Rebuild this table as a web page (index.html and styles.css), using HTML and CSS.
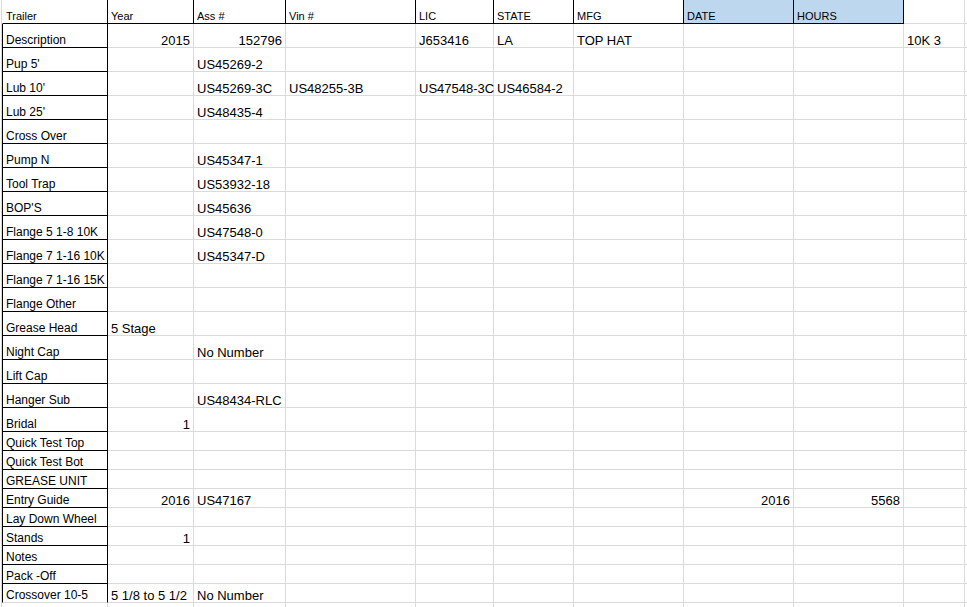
FILE: index.html
```html
<!DOCTYPE html>
<html lang="en">
<head>
    <meta charset="UTF-8">
    <meta name="viewport" content="width=device-width, initial-scale=1.0">
    <title>Trailer Equipment</title>
    <link rel="stylesheet" href="styles.css">
</head>
<body>
    <div class="sheet">
        <!-- header row -->
        <div class="c h first">Trailer</div><div class="c h">Year</div><div class="c h">Ass #</div><div class="c h">Vin #</div><div class="c h">LIC</div><div class="c h">STATE</div><div class="c h">MFG</div><div class="c h blue">DATE</div><div class="c h blue">HOURS</div><div class="c"></div><div class="c"></div>

        <!-- tall rows -->
        <div class="c lbl">Description</div><div class="c n">2015</div><div class="c n">152796</div><div class="c"></div><div class="c">J653416</div><div class="c">LA</div><div class="c">TOP HAT</div><div class="c"></div><div class="c"></div><div class="c">10K 3</div><div class="c"></div>
        <div class="c lbl">Pup 5'</div><div class="c"></div><div class="c">US45269-2</div><div class="c"></div><div class="c"></div><div class="c"></div><div class="c"></div><div class="c"></div><div class="c"></div><div class="c"></div><div class="c"></div>
        <div class="c lbl">Lub 10'</div><div class="c"></div><div class="c">US45269-3C</div><div class="c">US48255-3B</div><div class="c">US47548-3C</div><div class="c">US46584-2</div><div class="c"></div><div class="c"></div><div class="c"></div><div class="c"></div><div class="c"></div>
        <div class="c lbl">Lub 25'</div><div class="c"></div><div class="c">US48435-4</div><div class="c"></div><div class="c"></div><div class="c"></div><div class="c"></div><div class="c"></div><div class="c"></div><div class="c"></div><div class="c"></div>
        <div class="c lbl">Cross Over</div><div class="c"></div><div class="c"></div><div class="c"></div><div class="c"></div><div class="c"></div><div class="c"></div><div class="c"></div><div class="c"></div><div class="c"></div><div class="c"></div>
        <div class="c lbl">Pump N</div><div class="c"></div><div class="c">US45347-1</div><div class="c"></div><div class="c"></div><div class="c"></div><div class="c"></div><div class="c"></div><div class="c"></div><div class="c"></div><div class="c"></div>
        <div class="c lbl">Tool Trap</div><div class="c"></div><div class="c">US53932-18</div><div class="c"></div><div class="c"></div><div class="c"></div><div class="c"></div><div class="c"></div><div class="c"></div><div class="c"></div><div class="c"></div>
        <div class="c lbl">BOP'S</div><div class="c"></div><div class="c">US45636</div><div class="c"></div><div class="c"></div><div class="c"></div><div class="c"></div><div class="c"></div><div class="c"></div><div class="c"></div><div class="c"></div>
        <div class="c lbl">Flange 5 1-8 10K</div><div class="c"></div><div class="c">US47548-0</div><div class="c"></div><div class="c"></div><div class="c"></div><div class="c"></div><div class="c"></div><div class="c"></div><div class="c"></div><div class="c"></div>
        <div class="c lbl">Flange 7 1-16 10K</div><div class="c"></div><div class="c">US45347-D</div><div class="c"></div><div class="c"></div><div class="c"></div><div class="c"></div><div class="c"></div><div class="c"></div><div class="c"></div><div class="c"></div>
        <div class="c lbl">Flange 7 1-16 15K</div><div class="c"></div><div class="c"></div><div class="c"></div><div class="c"></div><div class="c"></div><div class="c"></div><div class="c"></div><div class="c"></div><div class="c"></div><div class="c"></div>
        <div class="c lbl">Flange Other</div><div class="c"></div><div class="c"></div><div class="c"></div><div class="c"></div><div class="c"></div><div class="c"></div><div class="c"></div><div class="c"></div><div class="c"></div><div class="c"></div>
        <div class="c lbl">Grease Head</div><div class="c">5 Stage</div><div class="c"></div><div class="c"></div><div class="c"></div><div class="c"></div><div class="c"></div><div class="c"></div><div class="c"></div><div class="c"></div><div class="c"></div>
        <div class="c lbl">Night Cap</div><div class="c"></div><div class="c">No Number</div><div class="c"></div><div class="c"></div><div class="c"></div><div class="c"></div><div class="c"></div><div class="c"></div><div class="c"></div><div class="c"></div>
        <div class="c lbl">Lift Cap</div><div class="c"></div><div class="c"></div><div class="c"></div><div class="c"></div><div class="c"></div><div class="c"></div><div class="c"></div><div class="c"></div><div class="c"></div><div class="c"></div>
        <div class="c lbl">Hanger Sub</div><div class="c"></div><div class="c">US48434-RLC</div><div class="c"></div><div class="c"></div><div class="c"></div><div class="c"></div><div class="c"></div><div class="c"></div><div class="c"></div><div class="c"></div>
        <div class="c lbl">Bridal</div><div class="c n">1</div><div class="c"></div><div class="c"></div><div class="c"></div><div class="c"></div><div class="c"></div><div class="c"></div><div class="c"></div><div class="c"></div><div class="c"></div>

        <!-- short rows -->
        <div class="c lbl">Quick Test Top</div><div class="c"></div><div class="c"></div><div class="c"></div><div class="c"></div><div class="c"></div><div class="c"></div><div class="c"></div><div class="c"></div><div class="c"></div><div class="c"></div>
        <div class="c lbl">Quick Test Bot</div><div class="c"></div><div class="c"></div><div class="c"></div><div class="c"></div><div class="c"></div><div class="c"></div><div class="c"></div><div class="c"></div><div class="c"></div><div class="c"></div>
        <div class="c lbl">GREASE UNIT</div><div class="c"></div><div class="c"></div><div class="c"></div><div class="c"></div><div class="c"></div><div class="c"></div><div class="c"></div><div class="c"></div><div class="c"></div><div class="c"></div>
        <div class="c lbl">Entry Guide</div><div class="c n">2016</div><div class="c">US47167</div><div class="c"></div><div class="c"></div><div class="c"></div><div class="c"></div><div class="c n">2016</div><div class="c n">5568</div><div class="c"></div><div class="c"></div>
        <div class="c lbl">Lay Down Wheel</div><div class="c"></div><div class="c"></div><div class="c"></div><div class="c"></div><div class="c"></div><div class="c"></div><div class="c"></div><div class="c"></div><div class="c"></div><div class="c"></div>
        <div class="c lbl">Stands</div><div class="c n">1</div><div class="c"></div><div class="c"></div><div class="c"></div><div class="c"></div><div class="c"></div><div class="c"></div><div class="c"></div><div class="c"></div><div class="c"></div>
        <div class="c lbl">Notes</div><div class="c"></div><div class="c"></div><div class="c"></div><div class="c"></div><div class="c"></div><div class="c"></div><div class="c"></div><div class="c"></div><div class="c"></div><div class="c"></div>
        <div class="c lbl">Pack -Off</div><div class="c"></div><div class="c"></div><div class="c"></div><div class="c"></div><div class="c"></div><div class="c"></div><div class="c"></div><div class="c"></div><div class="c"></div><div class="c"></div>
        <div class="c lbl last">Crossover 10-5</div><div class="c">5 1/8 to 5 1/2</div><div class="c">No Number</div><div class="c"></div><div class="c"></div><div class="c"></div><div class="c"></div><div class="c"></div><div class="c"></div><div class="c"></div><div class="c"></div>
        <div class="c"></div><div class="c"></div><div class="c"></div><div class="c"></div><div class="c"></div><div class="c"></div><div class="c"></div><div class="c"></div><div class="c"></div><div class="c"></div><div class="c"></div>
    </div>
</body>
</html>
```

FILE: styles.css
```css
body {
    margin: 0;
    background: #fff;
    color: #000;
    font-family: "Liberation Sans", Arial, sans-serif;
    overflow: hidden;
}

.sheet {
    display: grid;
    grid-template-columns: 106px 86px 92px 130px 78px 80px 110px 110px 110px 61px 40px;
    grid-template-rows: repeat(18, 24px) repeat(10, 19px);
    width: max-content;
    margin-left: 1px;
    border-left: 1px solid #dadada;
}

/* one spreadsheet cell */
.c {
    box-sizing: border-box;
    display: flex;
    align-items: flex-end;
    padding: 0 3px;
    border-right: 1px solid #dadada;
    border-bottom: 1px solid #dadada;
    font-size: 13px;
    line-height: 13px;
    white-space: nowrap;
    min-width: 0;
}

.n {
    justify-content: flex-end;
}

.h {
    font-size: 11px;
    border-right-color: #000;
    border-bottom-color: #000;
}

.h.first {
    border-left: 1px solid transparent;
}

.blue {
    background-color: #bdd7ee;
}

.lbl {
    font-size: 12px;
    border-left: 1px solid #000;
    border-right-color: #000;
    border-bottom-color: #000;
}

.lbl.last {
    border-bottom-color: #dadada;
}
```
